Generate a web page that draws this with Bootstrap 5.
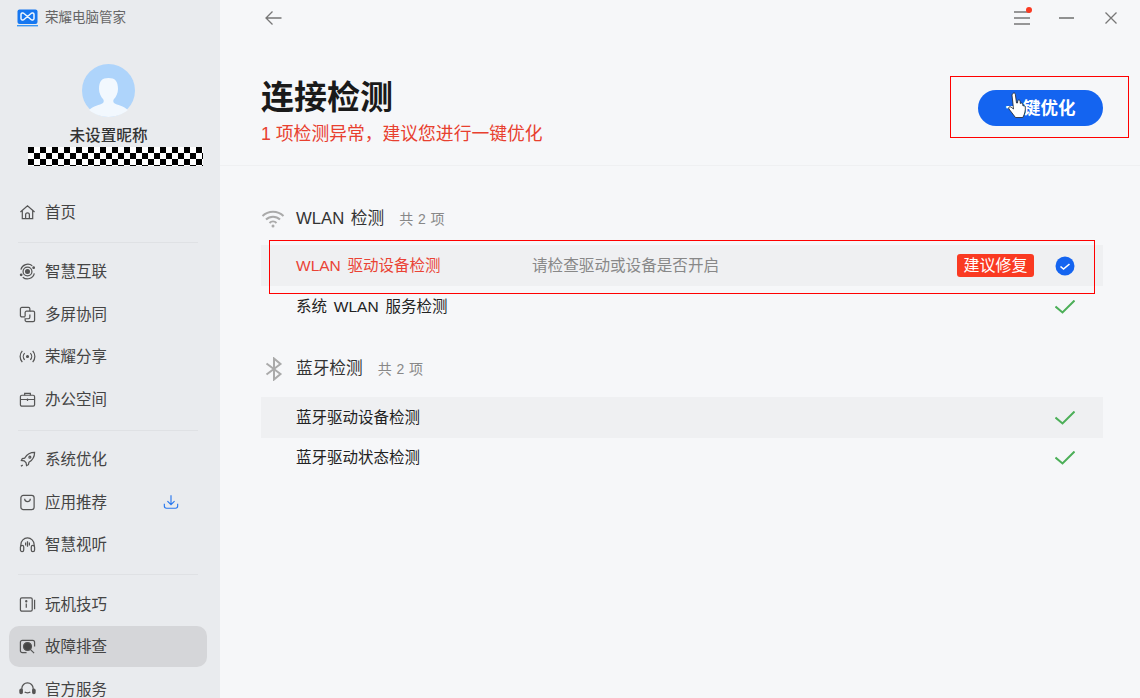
<!DOCTYPE html>
<html lang="zh-CN">
<head>
<meta charset="UTF-8">
<title>荣耀电脑管家</title>
<link href="https://cdn.jsdelivr.net/npm/bootstrap@5.3.0/dist/css/bootstrap.min.css" rel="stylesheet">
<style>
html, body { height: 698px; overflow: hidden; }
body { font-family: "Liberation Sans", "Noto Sans CJK SC", sans-serif; background: #f6f7f9; color: #222; position: relative; }
.side { width: 220px; height: 698px; background: #e9ebee; flex: none; overflow: hidden; }
.side > * { flex-shrink: 0; }
.brand { height: 36px; padding-left: 17px; gap: 7px; font-size: 13.5px; color: #666; }
.brand span { padding-top: 1px; }
.who { padding-right: 3px; }
.avatar { width: 53px; height: 53px; margin-top: 28px; }
.nick { font-size: 15.6px; font-weight: 500; color: #333; line-height: 20px; margin-top: 9px; }
.mask { width: 175px; height: 19px; margin: 1px 0 0 28px; background: repeating-conic-gradient(#000 0 25%, #fff 0 50%) 6px 0 / 12px 12px; }
.menu-box { margin-top: 25px; }
.menu-item { height: 42.5px; margin: 0 13px 0 9px; padding-left: 10px; gap: 9px; border-radius: 10px; font-size: 15.5px; color: #444; }
.menu-item svg { flex: none; width: 17px; height: 17px; fill: none; stroke: #555; stroke-width: 1.3; }
.menu-item.on { background: #d5d6d9; height: 41px; margin-top: .75px; margin-bottom: .75px; }
.menu-line { height: 1px; background: #dfe1e4; margin: 8px 22px 8px 18px; }
.menu-line.wide { margin-top: 9px; margin-bottom: 8px; }
.dl { margin-left: 47px; }
.dl.dl svg { stroke: #2a78ee; width: 16px; height: 16px; }
.main-area { min-width: 0; }
.top-bar { height: 36px; padding: 0 23px 0 45px; }
.top-bar svg { fill: none; stroke: #777; stroke-width: 1.3; }
.win-btns { gap: 29px; }
.win-close { margin-left: 2px; }
.dot-red { width: 6px; height: 6px; background: #fa3a22; border-radius: 50%; right: -2px; top: -4px; }
.head-box { height: 130px; border-bottom: 1px solid #eff0f2; padding: 0 37px 0 41px; }
.page-title { font-size: 33px; font-weight: 700; line-height: 40px; margin: 42px 0 0; color: #1a1a1a; }
.page-sub { font-size: 17.8px; line-height: 22px; margin-top: 5px; color: #e8402f; }
.go-btn { width: 125px; height: 36px; margin-top: 54px; background: #1464f0; color: #fff; border: 0; border-radius: 18px; font-size: 17.5px; font-weight: 700; padding: 0; }
.go-btn:hover { background: #1464f0; color: #fff; }
.body-box { padding: 0 37px 0 41px; }
.group-head { height: 26px; margin-top: 40px; margin-bottom: 13px; font-size: 16.7px; color: #333; word-spacing: 2px; }
.group-head.next { margin-top: 29px; margin-bottom: 15px; }
.group-icon { width: 24px; margin-right: 11px; }
.group-icon.bt { margin-left: 1px; margin-right: 10px; }
.group-count { font-size: 14px; color: #888; margin-left: 15px; letter-spacing: .4px; word-spacing: 0; }
.check-row { height: 41px; padding: 0 28px 0 35px; font-size: 15.5px; color: #222; word-spacing: 2.5px; }
.check-row.alt { background: #eff0f2; }
.check-row.last { height: 40px; }
.row-name { width: 236px; }
.row-bad { color: #ea4335; }
.row-tip { color: #888; font-size: 15.6px; }
.fix-tag { width: 77px; height: 23px; background: #fa3a22; color: #fff; border-radius: 3px; font-size: 16px; line-height: 23px; text-align: center; margin-right: 21px; }
.mark-box { border: 1px solid #f00; position: absolute; pointer-events: none; }
.mark-a { left: 950px; top: 76px; width: 179px; height: 62px; }
.mark-b { left: 269px; top: 240px; width: 826px; height: 54px; }
.hand { position: absolute; left: 1006px; top: 92px; }
</style>
</head>
<body>
<div class="d-flex">
  <aside class="side d-flex flex-column">
    <div class="brand d-flex align-items-center">
      <svg width="21" height="18" viewBox="0 0 21 18"><rect x="0.5" y="0.5" width="20" height="14.500" rx="2" fill="#1677f0"/><rect y="16" width="21" height="1.400" fill="#3a97f5"/><path d="M4 5.500C4 4 6 3.500 7 4.500l7 6c1 1 3 .5 3-1v-4C17 4 15 3.500 14 4.500l-7 6c-1 1-3 .5-3-1Z" fill="none" stroke="#f0f7ff" stroke-width="1.500"/></svg>
      <span>荣耀电脑管家</span>
    </div>
    <div class="who d-flex flex-column align-items-center">
      <svg class="avatar" viewBox="0 0 53 53"><circle cx="26.500" cy="26.500" r="26.500" fill="#aed4fb"/><path d="M7 46c4-4 11-5 14-7 1-1 1-3 0-4-2-2-4-6-4-10 0-8 3-11 9.500-11s9.500 3 9.500 11c0 4-2 8-4 10-1 1-1 3 0 4 3 2 10 3 14 7-5 4-12 7-19.500 7S12 50 7 46Z" fill="#f2f8fe"/></svg>
      <div class="nick">未设置昵称</div>
    </div>
    <div class="mask"></div>
    <nav class="menu-box">
      <div class="menu-item d-flex align-items-center"><svg viewBox="0 0 18 18"><path d="M1.500 8.500 9 2l7.500 6.500M3.500 7v8.500h11V7M7 15.500v-4a2 2 0 0 1 4 0v4"/></svg>首页</div>
      <div class="menu-line"></div>
      <div class="menu-item d-flex align-items-center"><svg viewBox="0 0 18 18"><circle cx="9" cy="9" r="2" fill="#555"/><circle cx="9" cy="9" r="4.700"/><path d="M2 7a7.500 7.500 0 0 1 12-4M16.200 11A7.500 7.500 0 0 1 4 15"/><circle cx="15.500" cy="5" r=".8" fill="#555"/><circle cx="2.300" cy="12.500" r=".8" fill="#555"/></svg>智慧互联</div>
      <div class="menu-item d-flex align-items-center"><svg viewBox="0 0 18 18"><path d="M6.500 11.500H3a1.500 1.500 0 0 1-1.500-1.500V3A1.500 1.500 0 0 1 3 1.500h7A1.500 1.500 0 0 1 11.500 3v2.500H8A1.500 1.500 0 0 0 6.500 7v4"/><path d="M11.500 5.500H15A1.500 1.500 0 0 1 16.500 7v8a1.500 1.500 0 0 1-1.500 1.500H8A1.500 1.500 0 0 1 6.500 15v-1.500H10a1.500 1.500 0 0 0 1.500-1.500V9"/></svg>多屏协同</div>
      <div class="menu-item d-flex align-items-center"><svg viewBox="0 0 18 18"><circle cx="9" cy="9" r="1" fill="#555"/><path d="M6 5.500a5 5 0 0 0 0 7M12 5.500a5 5 0 0 1 0 7M3.500 3a9 9 0 0 0 0 12M14.500 3a9 9 0 0 1 0 12"/></svg>荣耀分享</div>
      <div class="menu-item d-flex align-items-center"><svg viewBox="0 0 18 18"><rect x="1.500" y="4.500" width="15" height="11.500" rx="1.500"/><path d="M6 4.500V2.500h6v2M1.500 9h15M9 8v2.500"/></svg>办公空间</div>
      <div class="menu-line wide"></div>
      <div class="menu-item d-flex align-items-center"><svg viewBox="0 0 18 18"><path d="M16.500 1.500c-5 0-8 2-10.500 6L3.500 8l-1 2 3 .5 2 2 .5 3 2-1 .5-2.500c4-2.500 6-5.500 6-10.500ZM2 16l2-1"/><circle cx="11.500" cy="6.500" r="1"/></svg>系统优化</div>
      <div class="menu-item d-flex align-items-center"><svg viewBox="0 0 18 18"><rect x="2" y="1.500" width="14" height="15" rx="2.500"/><path d="M6 5a3 3 0 0 0 6 0"/></svg>应用推荐<span class="dl d-flex"><svg viewBox="0 0 18 18"><path d="M9 1.500v10M5 8l4 4 4-4M1.500 11v2.500a2.500 2.500 0 0 0 2.500 2.500h10a2.500 2.500 0 0 0 2.500-2.500V11"/></svg></span></div>
      <div class="menu-item d-flex align-items-center"><svg viewBox="0 0 18 18"><path d="M2 11V9a7 7 0 0 1 14 0v2"/><rect x="1.500" y="10" width="3.500" height="6.500" rx="1.700"/><rect x="13" y="10" width="3.500" height="6.500" rx="1.700"/><path d="M7 7v3M9 5.500v6M11 7v3"/></svg>智慧视听</div>
      <div class="menu-line"></div>
      <div class="menu-item d-flex align-items-center"><svg viewBox="0 0 18 18"><rect x="1.500" y="2" width="12.500" height="14" rx="1.500"/><path d="M16.500 4v10M7.700 8v4.500"/><circle cx="7.700" cy="5.500" r=".6" fill="#555"/></svg>玩机技巧</div>
      <div class="menu-item on d-flex align-items-center"><svg viewBox="0 0 18 18"><path d="M8 15.500H3.500a2 2 0 0 1-2-2v-9a2 2 0 0 1 2-2h11a2 2 0 0 1 2 2V9"/><circle cx="9" cy="9" r="4.200" fill="#444"/><path d="m12 12 4 4"/></svg>故障排查</div>
      <div class="menu-item d-flex align-items-center"><svg viewBox="0 0 18 18"><path d="M3 9.500V8a6 6 0 0 1 12 0v1.500M6 11.500c1 1.300 5 1.300 6 0"/><rect x="1" y="8.500" width="2.500" height="5" rx="1.200" fill="#555"/><rect x="14.500" y="8.500" width="2.500" height="5" rx="1.200" fill="#555"/></svg>官方服务</div>
    </nav>
  </aside>

  <main class="main-area flex-grow-1">
    <div class="top-bar d-flex align-items-center justify-content-between">
      <svg width="17" height="14" viewBox="0 0 17 14"><path d="M16.500 7H1M7.500 .5 1 7l6.500 6.500"/></svg>
      <div class="win-btns d-flex align-items-center">
        <span class="position-relative d-flex"><svg width="16" height="14" viewBox="0 0 16 14"><path d="M0 1h16M0 7h16M0 13h16"/></svg><span class="dot-red position-absolute"></span></span>
        <svg width="15" height="2" viewBox="0 0 15 2"><path d="M0 1h15" stroke-width="1.600"/></svg>
        <svg class="win-close" width="12" height="12" viewBox="0 0 12 12"><path d="m.5 .5 11 11M11.500 .5l-11 11"/></svg>
      </div>
    </div>
    <header class="head-box d-flex justify-content-between">
      <div>
        <h1 class="page-title">连接检测</h1>
        <div class="page-sub">1 项检测异常，建议您进行一键优化</div>
      </div>
      <button type="button" class="btn go-btn">一键优化</button>
    </header>
    <section class="body-box">
      <div class="group-head d-flex align-items-center">
        <span class="group-icon d-flex"><svg width="24" height="18" viewBox="0 0 24 18" fill="none" stroke="#aaa" stroke-width="2"><path d="M1.500 6a15 15 0 0 1 21 0M5 9.500a10 10 0 0 1 14 0M8.500 13a5 5 0 0 1 7 0"/><circle cx="12" cy="16" r="1.500" fill="#aaa" stroke="none"/></svg></span>
        <span>WLAN 检测</span><span class="group-count">共 2 项</span>
      </div>
      <div class="check-row alt d-flex align-items-center">
        <span class="row-name row-bad">WLAN 驱动设备检测</span>
        <span class="row-tip flex-grow-1">请检查驱动或设备是否开启</span>
        <span class="fix-tag">建议修复</span>
        <svg width="20" height="20" viewBox="0 0 20 20"><circle cx="10" cy="10" r="9.500" fill="#1464f0"/><path d="m5.500 10.500 3 2.500 6-5" fill="none" stroke="#fff" stroke-width="1.600"/></svg>
      </div>
      <div class="check-row d-flex align-items-center justify-content-between">
        <span>系统 WLAN 服务检测</span>
        <svg width="20" height="14" viewBox="0 0 20 14"><path d="m.5 6.500 7 6 12-12" fill="none" stroke="#4caf58" stroke-width="2"/></svg>
      </div>
      <div class="group-head next d-flex align-items-center">
        <span class="group-icon bt d-flex justify-content-center"><svg width="20" height="24" viewBox="0 0 20 24" fill="none" stroke="#aaa" stroke-width="2"><path d="m2.500 6.500 14 10.500-6.500 5.500V1.500l6.500 5.500-14 10.500"/></svg></span>
        <span>蓝牙检测</span><span class="group-count">共 2 项</span>
      </div>
      <div class="check-row alt d-flex align-items-center justify-content-between">
        <span>蓝牙驱动设备检测</span>
        <svg width="20" height="14" viewBox="0 0 20 14"><path d="m.5 6.500 7 6 12-12" fill="none" stroke="#4caf58" stroke-width="2"/></svg>
      </div>
      <div class="check-row last d-flex align-items-center justify-content-between">
        <span>蓝牙驱动状态检测</span>
        <svg width="20" height="14" viewBox="0 0 20 14"><path d="m.5 6.500 7 6 12-12" fill="none" stroke="#4caf58" stroke-width="2"/></svg>
      </div>
    </section>
  </main>
</div>
<div class="mark-box mark-a"></div>
<div class="mark-box mark-b"></div>
<svg class="hand" width="24" height="27" viewBox="0 0 24 27"><path d="M7 1.500c1-1 2-.5 2.300.8L10.500 11l1 0 .3-2.500c1-.8 2-.5 2.300.5l.2 2.500c1-.8 2-.5 2.400.5l.3 2c1-.6 2-.2 2.300 1 .3 3-.5 7-2.500 10.500H9.500L3 17c-1-1.500.5-3 2-2l2.500 2L6 3c0-.6.400-1.100 1-1.500Z" fill="#fff" stroke="#222" stroke-width=".8"/></svg>
</body>
</html>
